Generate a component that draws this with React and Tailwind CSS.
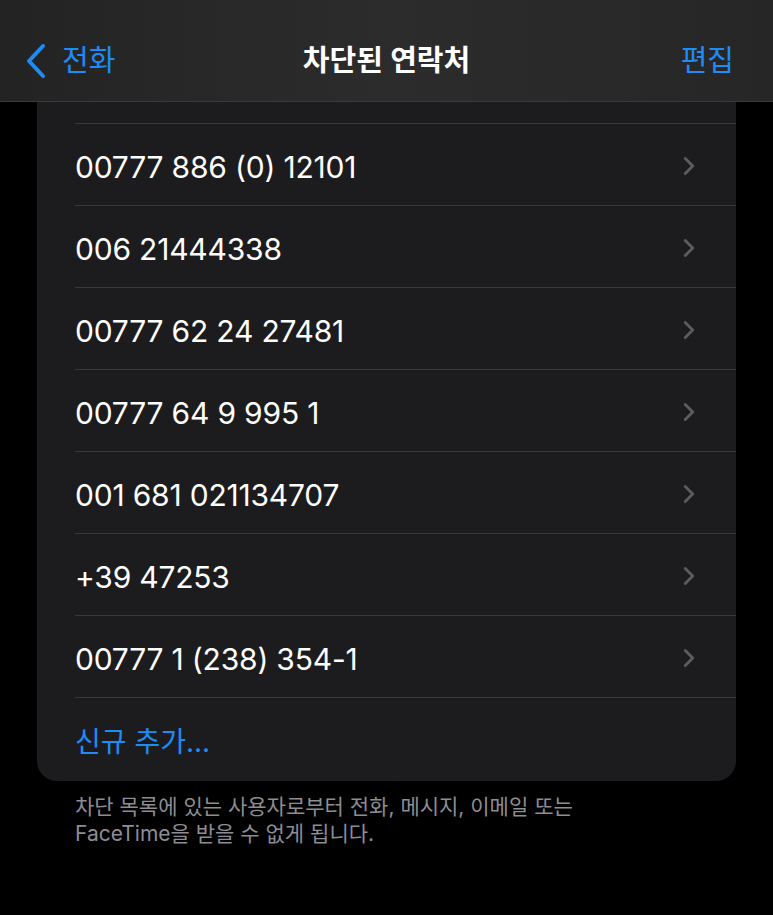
import { ChevronRight } from 'lucide-react'

const numbers = [
  '00777 886 (0) 12101',
  '006 21444338',
  '00777 62 24 27481',
  '00777 64 9 995 1',
  '001 681 021134707',
  '+39 47253',
  '00777 1 (238) 354-1',
]

export default function App() {
  return (
    <div
      className="min-h-[915px] w-[773px] bg-black"
      style={{ fontFamily: 'Inter, "Noto Sans CJK KR", sans-serif' }}
    >
      {/* Nav bar */}
      <div className="flex h-[102px] items-end border-b border-[#3a3a3c] bg-gradient-to-r from-[#232323] via-[#2c2c2c] to-[#262626] pb-[20px]">
        <div className="flex w-[200px] items-center pl-[25px] text-[#1e8cf5]">
          <svg width="22" height="36" viewBox="0 0 22 36" fill="none">
            <path d="M18 3 L4 18 L18 33" stroke="currentColor" strokeWidth="4" strokeLinecap="round" strokeLinejoin="round" />
          </svg>
          <span className="ml-[15px] text-[29px] leading-[40px]">전화</span>
        </div>
        <div className="flex-1 text-center text-[29px] font-semibold leading-[40px] text-white">
          차단된 연락처
        </div>
        <div className="w-[200px] pr-[39px] text-right text-[29px] leading-[40px] text-[#1e8cf5]">
          편집
        </div>
      </div>

      {/* List card */}
      <div className="mx-[37px] overflow-hidden rounded-b-[20px] bg-[#1c1c1e]">
        <div className="ml-[38px] h-[22px] border-b border-[#38383a]" />
        {numbers.map((n) => (
          <div key={n} className="ml-[38px] flex h-[82px] items-center border-b border-[#38383a] pr-[36px]">
            <span className="flex-1 pt-[5px] text-[30px] tracking-[-0.2px] text-white">{n}</span>
            <ChevronRight className="-mr-[4px] mt-[3px] h-[30px] w-[30px] text-[#5b5b60]" strokeWidth={2.3} />
          </div>
        ))}
        <div className="ml-[38px] flex h-[83px] items-center pt-[4px] text-[28px] text-[#1e8cf5]">
          신규 추가...
        </div>
      </div>

      {/* Footer */}
      <div className="px-[75px] pt-[12px] text-[21px] leading-[27px] text-[#8d8d93]">
        차단 목록에 있는 사용자로부터 전화, 메시지, 이메일 또는
        <br />
        FaceTime을 받을 수 없게 됩니다.
      </div>
    </div>
  )
}
